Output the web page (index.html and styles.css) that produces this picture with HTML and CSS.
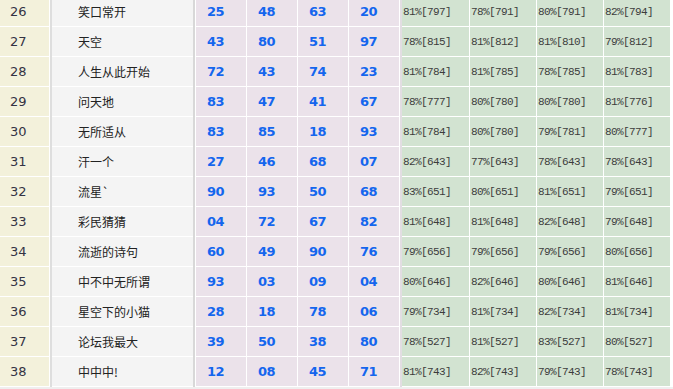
FILE: index.html
```html
<!DOCTYPE html>
<html lang="zh-CN">
<head>
<meta charset="utf-8">
<title>预测排行</title>
<link rel="stylesheet" href="styles.css">
</head>
<body>
<div class="board">
  <div class="row"><div class="c idx">26</div><div class="band b1"></div><div class="c name">笑口常开</div><div class="band b2"></div><div class="c num">25</div><div class="c num">48</div><div class="c num">63</div><div class="c num">20</div><div class="band b3"></div><div class="c pct first">81%[797]</div><div class="c pct">78%[791]</div><div class="c pct">80%[791]</div><div class="c pct">82%[794]</div></div>
  <div class="row"><div class="c idx">27</div><div class="band b1"></div><div class="c name">天空</div><div class="band b2"></div><div class="c num">43</div><div class="c num">80</div><div class="c num">51</div><div class="c num">97</div><div class="band b3"></div><div class="c pct first">78%[815]</div><div class="c pct">81%[812]</div><div class="c pct">81%[810]</div><div class="c pct">79%[812]</div></div>
  <div class="row"><div class="c idx">28</div><div class="band b1"></div><div class="c name">人生从此开始</div><div class="band b2"></div><div class="c num">72</div><div class="c num">43</div><div class="c num">74</div><div class="c num">23</div><div class="band b3"></div><div class="c pct first">81%[784]</div><div class="c pct">81%[785]</div><div class="c pct">78%[785]</div><div class="c pct">81%[783]</div></div>
  <div class="row"><div class="c idx">29</div><div class="band b1"></div><div class="c name">问天地</div><div class="band b2"></div><div class="c num">83</div><div class="c num">47</div><div class="c num">41</div><div class="c num">67</div><div class="band b3"></div><div class="c pct first">78%[777]</div><div class="c pct">80%[780]</div><div class="c pct">80%[780]</div><div class="c pct">81%[776]</div></div>
  <div class="row"><div class="c idx">30</div><div class="band b1"></div><div class="c name">无所适从</div><div class="band b2"></div><div class="c num">83</div><div class="c num">85</div><div class="c num">18</div><div class="c num">93</div><div class="band b3"></div><div class="c pct first">81%[784]</div><div class="c pct">80%[780]</div><div class="c pct">79%[781]</div><div class="c pct">80%[777]</div></div>
  <div class="row"><div class="c idx">31</div><div class="band b1"></div><div class="c name">汗一个</div><div class="band b2"></div><div class="c num">27</div><div class="c num">46</div><div class="c num">68</div><div class="c num">07</div><div class="band b3"></div><div class="c pct first">82%[643]</div><div class="c pct">77%[643]</div><div class="c pct">78%[643]</div><div class="c pct">78%[643]</div></div>
  <div class="row"><div class="c idx">32</div><div class="band b1"></div><div class="c name">流星`</div><div class="band b2"></div><div class="c num">90</div><div class="c num">93</div><div class="c num">50</div><div class="c num">68</div><div class="band b3"></div><div class="c pct first">83%[651]</div><div class="c pct">80%[651]</div><div class="c pct">81%[651]</div><div class="c pct">79%[651]</div></div>
  <div class="row"><div class="c idx">33</div><div class="band b1"></div><div class="c name">彩民猜猜</div><div class="band b2"></div><div class="c num">04</div><div class="c num">72</div><div class="c num">67</div><div class="c num">82</div><div class="band b3"></div><div class="c pct first">81%[648]</div><div class="c pct">81%[648]</div><div class="c pct">82%[648]</div><div class="c pct">79%[648]</div></div>
  <div class="row"><div class="c idx">34</div><div class="band b1"></div><div class="c name">流逝的诗句</div><div class="band b2"></div><div class="c num">60</div><div class="c num">49</div><div class="c num">90</div><div class="c num">76</div><div class="band b3"></div><div class="c pct first">79%[656]</div><div class="c pct">79%[656]</div><div class="c pct">79%[656]</div><div class="c pct">80%[656]</div></div>
  <div class="row"><div class="c idx">35</div><div class="band b1"></div><div class="c name">中不中无所谓</div><div class="band b2"></div><div class="c num">93</div><div class="c num">03</div><div class="c num">09</div><div class="c num">04</div><div class="band b3"></div><div class="c pct first">80%[646]</div><div class="c pct">82%[646]</div><div class="c pct">80%[646]</div><div class="c pct">81%[646]</div></div>
  <div class="row"><div class="c idx">36</div><div class="band b1"></div><div class="c name">星空下的小猫</div><div class="band b2"></div><div class="c num">28</div><div class="c num">18</div><div class="c num">78</div><div class="c num">06</div><div class="band b3"></div><div class="c pct first">79%[734]</div><div class="c pct">81%[734]</div><div class="c pct">82%[734]</div><div class="c pct">81%[734]</div></div>
  <div class="row"><div class="c idx">37</div><div class="band b1"></div><div class="c name">论坛我最大</div><div class="band b2"></div><div class="c num">39</div><div class="c num">50</div><div class="c num">38</div><div class="c num">80</div><div class="band b3"></div><div class="c pct first">78%[527]</div><div class="c pct">81%[527]</div><div class="c pct">83%[527]</div><div class="c pct">80%[527]</div></div>
  <div class="row"><div class="c idx">38</div><div class="band b1"></div><div class="c name">中中中!</div><div class="band b2"></div><div class="c num">12</div><div class="c num">08</div><div class="c num">45</div><div class="c num">71</div><div class="band b3"></div><div class="c pct first">81%[743]</div><div class="c pct">82%[743]</div><div class="c pct">79%[743]</div><div class="c pct">78%[743]</div></div>
</div>
</body>
</html>
```

FILE: styles.css
```css
html, body {
  margin: 0;
  padding: 0;
  background: #efefef;
}
.board {
  margin-top: -3px;
  width: 673px;
  overflow: hidden;
}
.row {
  display: flex;
  height: 30px;
  background: #ffffff;
}
.c {
  height: 29px;
  display: flex;
  align-items: center;
  box-sizing: border-box;
  white-space: nowrap;
  flex: none;
}
.band {
  height: 30px;
  flex: none;
  width: 2px;
}
.b1 {
  background: #dedede;
  margin-left: 1px;
}
.b2 {
  background: #d8d8d8;
  margin-right: 1px;
}
.b3 {
  background: #e2dde2;
}
.idx {
  width: 49px;
  background: #f3f1db;
  padding-left: 10px;
  font-family: "DejaVu Sans", Verdana, sans-serif;
  font-size: 13px;
  color: #333344;
}
.name {
  width: 141px;
  background: #f4f4f4;
  padding-left: 26px;
  font-family: "Noto Sans CJK SC", "DejaVu Sans", sans-serif;
  font-size: 12px;
  color: #222222;
}
.num {
  width: 50px;
  margin-right: 1px;
  background: #ebe2ea;
  padding-left: 11px;
  font-family: "DejaVu Sans", Verdana, sans-serif;
  font-weight: bold;
  font-size: 13px;
  letter-spacing: -0.6px;
  color: #1466ee;
}
.pct {
  width: 66px;
  margin-right: 1px;
  background: #d2e3d1;
  padding-left: 1px;
  font-family: "Liberation Mono", "DejaVu Sans Mono", monospace;
  font-size: 11px;
  letter-spacing: -0.6px;
  color: #3c3c3c;
}
.pct.first {
  width: 67px;
}
```
